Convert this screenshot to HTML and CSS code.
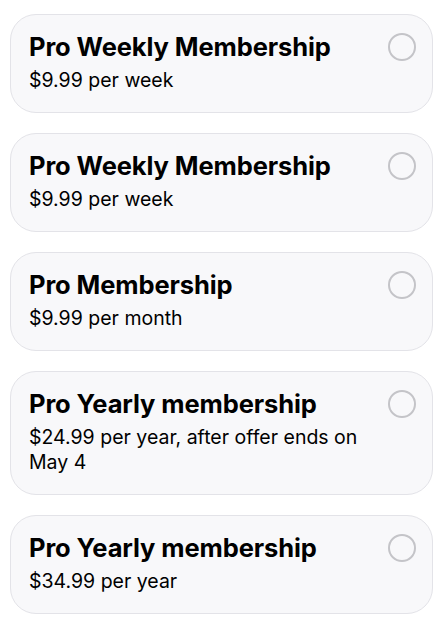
FILE: index.html
```html
<!DOCTYPE html>
<html lang="en">
  <head>
    <meta charset="UTF-8" />
    <meta name="viewport" content="width=device-width, initial-scale=1.0" />
    <title>Membership Plans</title>
    <link rel="stylesheet" href="styles.css">
  </head>
  <body>
    <div class="plans">
      <div class="plan">
        <div class="plan-text">
          <h2>Pro Weekly Membership</h2>
          <p>$9.99 per week</p>
        </div>
        <span class="radio"></span>
      </div>

      <div class="plan">
        <div class="plan-text">
          <h2>Pro Weekly Membership</h2>
          <p>$9.99 per week</p>
        </div>
        <span class="radio"></span>
      </div>

      <div class="plan">
        <div class="plan-text">
          <h2>Pro Membership</h2>
          <p>$9.99 per month</p>
        </div>
        <span class="radio"></span>
      </div>

      <div class="plan">
        <div class="plan-text">
          <h2>Pro Yearly membership</h2>
          <p>$24.99 per year, after offer ends on May 4</p>
        </div>
        <span class="radio"></span>
      </div>

      <div class="plan">
        <div class="plan-text">
          <h2>Pro Yearly membership</h2>
          <p>$34.99 per year</p>
        </div>
        <span class="radio"></span>
      </div>
    </div>
  </body>
</html>
```

FILE: styles.css
```css
body {
  font-family: Inter, "Noto Sans", Arial, sans-serif;
  background-color: #fff;
  margin: 0;
  padding: 0;
  color: #000;
}

.plans {
  display: flex;
  flex-direction: column;
  gap: 20px;
  padding: 14px 15px 14px 10px;
}

.plan {
  display: flex;
  align-items: flex-start;
  gap: 10px;
  padding: 17px 16px 19px 18px;
  background: #f8f8fa;
  border: 1px solid #e3e3e8;
  border-radius: 26px;
}

.plan-text {
  flex: 1;
}

.plan h2 {
  font-size: 25.5px;
  font-weight: 700;
  line-height: 30px;
  letter-spacing: -0.1px;
  margin: 0 0 6px;
}

.plan p {
  font-size: 19.5px;
  line-height: 25px;
  margin: 0;
}

.radio {
  width: 24px;
  height: 24px;
  margin-top: 1px;
  border: 2px solid #c4c4c8;
  border-radius: 50%;
  flex-shrink: 0;
}
```
